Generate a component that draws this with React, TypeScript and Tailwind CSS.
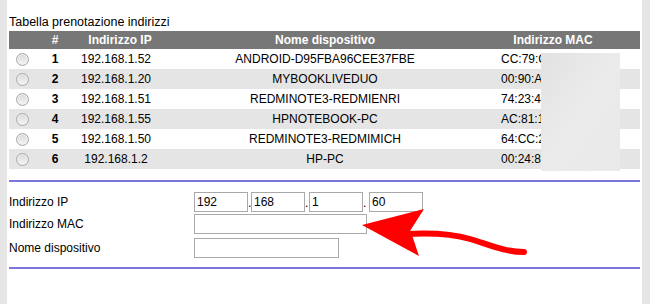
import React from 'react';

type Row = { n: number; ip: string; name: string; mac: string };

const rows: Row[] = [
  { n: 1, ip: '192.168.1.52', name: 'ANDROID-D95FBA96CEE37FBE', mac: 'CC:79:C' },
  { n: 2, ip: '192.168.1.20', name: 'MYBOOKLIVEDUO', mac: '00:90:A' },
  { n: 3, ip: '192.168.1.51', name: 'REDMINOTE3-REDMIENRI', mac: '74:23:4' },
  { n: 4, ip: '192.168.1.55', name: 'HPNOTEBOOK-PC', mac: 'AC:81:1' },
  { n: 5, ip: '192.168.1.50', name: 'REDMINOTE3-REDMIMICH', mac: '64:CC:2' },
  { n: 6, ip: '192.168.1.2', name: 'HP-PC', mac: '00:24:8' },
];

const cols = 'grid grid-cols-[26px_40px_90px_320px_136px_1fr] items-center';

const Radio = () => (
  <span className="block w-[13px] h-[13px] rounded-full border border-[#a8a8a8] bg-gradient-to-b from-[#d9d9d9] to-[#f5f5f5] shadow-[inset_0_0_0_1px_#f0f0f0]" />
);

const Box = ({ value, w }: { value?: string; w: string }) => (
  <div className={`${w} h-[20px] border border-[#a9a9a9] bg-white pl-[2px] text-[12px] leading-[18px] text-black`}>
    {value}
  </div>
);

const Field = ({ label, children, mt }: { label: string; children: React.ReactNode; mt: string }) => (
  <div className={`flex items-center h-[20px] ${mt}`}>
    <div className="w-[185px] text-[12px] text-black">{label}</div>
    <div className="flex items-center">{children}</div>
  </div>
);

export default function App() {
  return (
    <div
      className="relative flex w-[650px] h-[304px] bg-white overflow-hidden"
      style={{ fontFamily: '"Liberation Sans", Arial, sans-serif' }}
    >
      <div className="w-[7px] bg-[#e6e6e6]" />
      <div className="w-[631px] ml-[2px] mr-[2px] flex flex-col">
        <div className="mt-[13px] h-[18px] leading-[18px] text-[12.5px] text-black">
          Tabella prenotazione indirizzi
        </div>

        <div className="relative">
          <div className={`${cols} h-[18px] bg-[#777777] text-white text-[12px] font-bold`}>
            <span />
            <span className="text-center">#</span>
            <span className="text-center">Indirizzo IP</span>
            <span className="text-center">Nome dispositivo</span>
            <span className="text-center">Indirizzo MAC</span>
            <span />
          </div>
          {rows.map((r, i) => (
            <div
              key={r.n}
              className={`${cols} h-[20px] text-[12px] text-black ${i % 2 === 1 ? 'bg-[#e5e5e5]' : 'bg-white'}`}
            >
              <span className="flex justify-center">
                <Radio />
              </span>
              <span className="text-center font-bold">{r.n}</span>
              <span className="text-center pr-[8px]">{r.ip}</span>
              <span className="text-center">{r.name}</span>
              <span className="pl-[16px]">{r.mac}</span>
              <span />
            </div>
          ))}
          {/* blurred MAC addresses */}
          <div className="absolute left-[532px] top-[22px] w-[79px] h-[118px] bg-gradient-to-br from-[#e2e2e2] via-[#ebebeb] to-[#e9e9e9] blur-[0.5px]" />
        </div>

        <div className="mt-[11px] h-[2px] bg-[#7b76dd]" />

        <Field label="Indirizzo IP" mt="mt-[10px]">
          <Box value="192" w="w-[54px]" />
          <span className="w-[3px] text-[12px] leading-[20px] pt-[2px]">.</span>
          <Box value="168" w="w-[54px]" />
          <span className="w-[4px] text-[12px] leading-[20px] pt-[2px]">.</span>
          <Box value="1" w="w-[54px]" />
          <span className="w-[6px] text-[12px] leading-[20px] pt-[2px]">.</span>
          <Box value="60" w="w-[54px]" />
        </Field>
        <Field label="Indirizzo MAC" mt="mt-[2px]">
          <Box w="w-[173px]" />
        </Field>
        <Field label="Nome dispositivo" mt="mt-[4px]">
          <Box w="w-[145px]" />
        </Field>

        <div className="mt-[9px] h-[2px] bg-[#7b76dd]" />
      </div>
      <div className="w-[8px] bg-[#e6e6e6]" />

      <svg className="absolute left-0 top-0 pointer-events-none" width="650" height="304" viewBox="0 0 650 304">
        <polygon points="362,225 424,209 410,231 413,238 419,256" fill="#ff0000" />
        <path
          d="M406 234 C 425 233, 450 233, 470 239 S 505 252, 524 252"
          stroke="#ff0000"
          strokeWidth="6"
          strokeLinecap="round"
          fill="none"
        />
      </svg>
    </div>
  );
}
